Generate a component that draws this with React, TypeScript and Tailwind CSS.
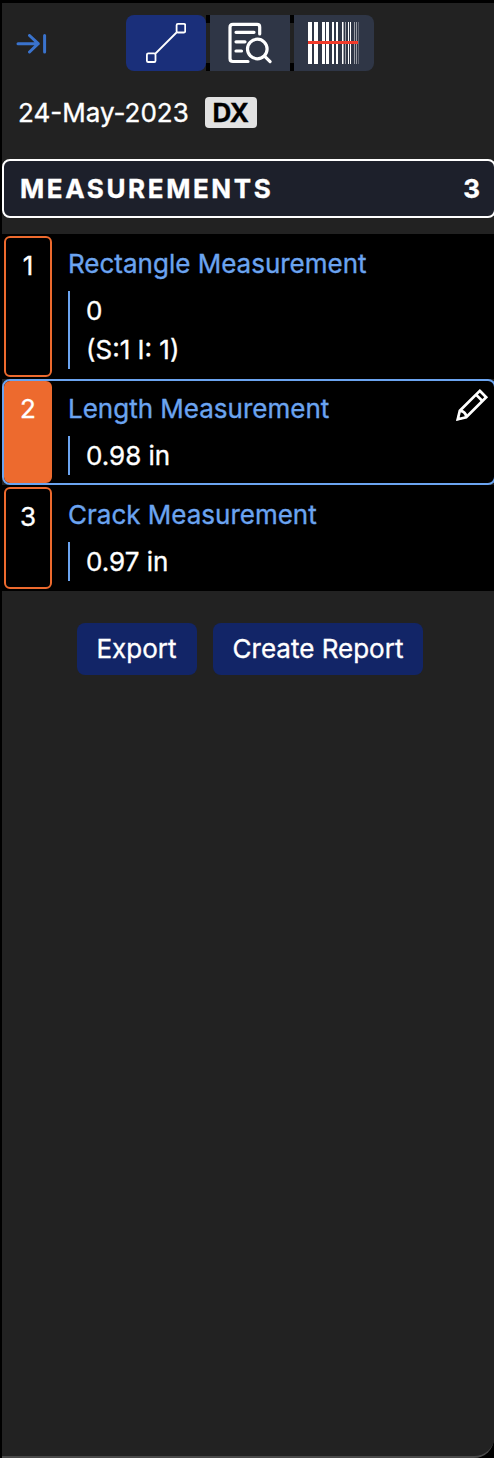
type Measurement = { title: string; lines: string[]; active?: boolean };

const measurements: Measurement[] = [
  { title: 'Rectangle Measurement', lines: ['0', '(S:1 I: 1)'] },
  { title: 'Length Measurement', lines: ['0.98 in'], active: true },
  { title: 'Crack Measurement', lines: ['0.97 in'] },
];

function CollapseIcon() {
  return (
    <svg className="mt-[19px] ml-[13px] h-[20px] w-[32px] shrink-0" viewBox="0 0 32 20" fill="none" stroke="#3a73cd" strokeWidth="3" strokeLinecap="round" strokeLinejoin="round">
      <path d="M3 9.7H23.2M14.5 1.5L23.2 9.7L14.5 18M29.6 1.5V18" />
    </svg>
  );
}

function LengthIcon() {
  return (
    <svg width="40" height="40" viewBox="0 0 40 40" fill="none" stroke="#fff" strokeWidth="1.8">
      <path d="M9.5 30.5L30.5 9.5" />
      <rect x="0.9" y="30.4" width="8.6" height="8.6" rx="1.3" />
      <rect x="30.6" y="0.9" width="8.6" height="8.6" rx="1.3" />
    </svg>
  );
}

function ReportIcon() {
  return (
    <svg className="-ml-px" width="46" height="42" viewBox="0 0 46 42" fill="none" stroke="#fff" strokeWidth="3.2" strokeLinecap="round" strokeLinejoin="round">
      <path d="M32.7 12V5Q32.7 2.4 30.1 2.4H5.9Q3 2.4 3 5.3V36.5Q3 39.5 5.9 39.5H21" />
      <path d="M9 10.3H27M9 19.8H18M9 29H14.5" />
      <circle cx="30.3" cy="27" r="9.8" />
      <path d="M37.5 34.2L43.1 39.6" />
    </svg>
  );
}

function BarcodeIcon() {
  const bars = [[0, 4], [6, 4], [14, 3], [18, 3], [24, 2], [28, 2], [34, 1], [40, 1], [42, 1]];
  return (
    <svg width="52" height="42" viewBox="0 0 52 42" shapeRendering="crispEdges">
      {bars.map(([x, w]) => (
        <rect key={x} x={x} y="0" width={w} height="42" fill="#fff" />
      ))}
      <path d="M35 0H36V42H35ZM37 0H38V42H37ZM46 0H47V42H46ZM48 0H49V42H48Z" fill="#989ba3" />
      <path d="M50 0H51V42H50Z" fill="#656975" />
      <rect x="0" y="19" width="50" height="3" fill="#f13b2b" />
    </svg>
  );
}

function PencilIcon() {
  return (
    <svg width="34" height="34" viewBox="0 0 34 34" fill="none" stroke="#fff" strokeWidth="2.7">
      <path d="M24.8 2.8L31.2 9.2L11.2 29.2L2.8 31.2L4.8 22.8Z" />
      <path d="M21 6.6L27.4 13M5.5 22.8Q10.5 23.5 11.2 28.5" />
      <path d="M1.6 32.4L2.6 27.4L6.6 31.4Z" fill="#fff" stroke="none" />
    </svg>
  );
}

function Divider() {
  return (
    <div className="flex h-[56px] w-[4px] items-center bg-black">
      <div className="h-[40px] w-[4px] bg-[#222222]" />
    </div>
  );
}

function Row({ item, index }: { item: Measurement; index: number }) {
  return (
    <div className={`flex w-[494px] border-2 bg-black ${item.active ? 'rounded-[8px] border-[#6ba4f0]' : 'border-black'}`}>
      <div className={`flex w-[48px] shrink-0 justify-center rounded-[6px] border-2 border-[#ed6a2e] leading-[36px] ${item.active ? 'bg-[#ed6a2e] pt-[8px]' : 'bg-black pt-[10px]'}`}>
        {index + 1}
      </div>
      <div className="pl-[16px] pt-[8px]">
        <div className="h-[39px] leading-[39px] text-[#6ba4f0]">{item.title}</div>
        <div className="mt-[8px] mb-[8px] border-l-2 border-[#6ba4f0] pl-[16px]">
          {item.lines.map((line) => (
            <div key={line} className="h-[39px] leading-[39px]">{line}</div>
          ))}
        </div>
      </div>
      {item.active && <div className="ml-auto mr-[5px] mt-[7px]"><PencilIcon /></div>}
    </div>
  );
}

export default function App() {
  return (
    <div className="h-[1458px] w-[494px] overflow-hidden bg-black pl-[2px] pt-[3px] font-['Inter',sans-serif] text-[26px] font-normal text-white [-webkit-text-stroke:0.35px]">
      <div className="h-[1455px] w-[492px] overflow-hidden rounded-br-[20px] border-b-2 border-[#4a4a4a] bg-[#222222]">
        <div className="flex h-[68px] pt-[12px]">
          <CollapseIcon />
          <div className="ml-[79px] flex h-[56px]">
            <div className="flex w-[80px] items-center justify-center rounded-[8px] bg-[#1a2f7a]"><LengthIcon /></div>
            <Divider />
            <div className="flex w-[80px] items-center justify-center bg-[#2f3646]"><ReportIcon /></div>
            <Divider />
            <div className="flex w-[80px] items-center justify-center rounded-r-[8px] bg-[#2f3646]"><BarcodeIcon /></div>
          </div>
        </div>
        <div className="mt-[22px] flex h-[39px] items-center pl-[16px]">
          <span className="leading-[39px]">24-May-2023</span>
          <span className="ml-[16px] flex h-[31px] w-[52px] items-center justify-center rounded-[4px] bg-[#e2e2e2] font-bold text-black">DX</span>
        </div>
        <div className="mt-[27px] flex h-[59px] w-[494px] items-center justify-between rounded-[8px] border-2 border-white bg-[#1d202b] pl-[16px] pr-[14px] font-bold">
          <span className="tracking-[2.6px]">MEASUREMENTS</span>
          <span>3</span>
        </div>
        <div className="mt-[16px] w-[494px]">
          {measurements.map((item, index) => (
            <Row key={item.title} item={item} index={index} />
          ))}
        </div>
        <div className="mt-[32px] flex gap-[16px] pl-[75px]">
          <button className="h-[52px] w-[120px] rounded-[8px] bg-[#122567] pr-px pb-[2px]">Export</button>
          <button className="h-[52px] w-[210px] rounded-[8px] bg-[#122567] pb-[2px]">Create Report</button>
        </div>
      </div>
    </div>
  );
}
